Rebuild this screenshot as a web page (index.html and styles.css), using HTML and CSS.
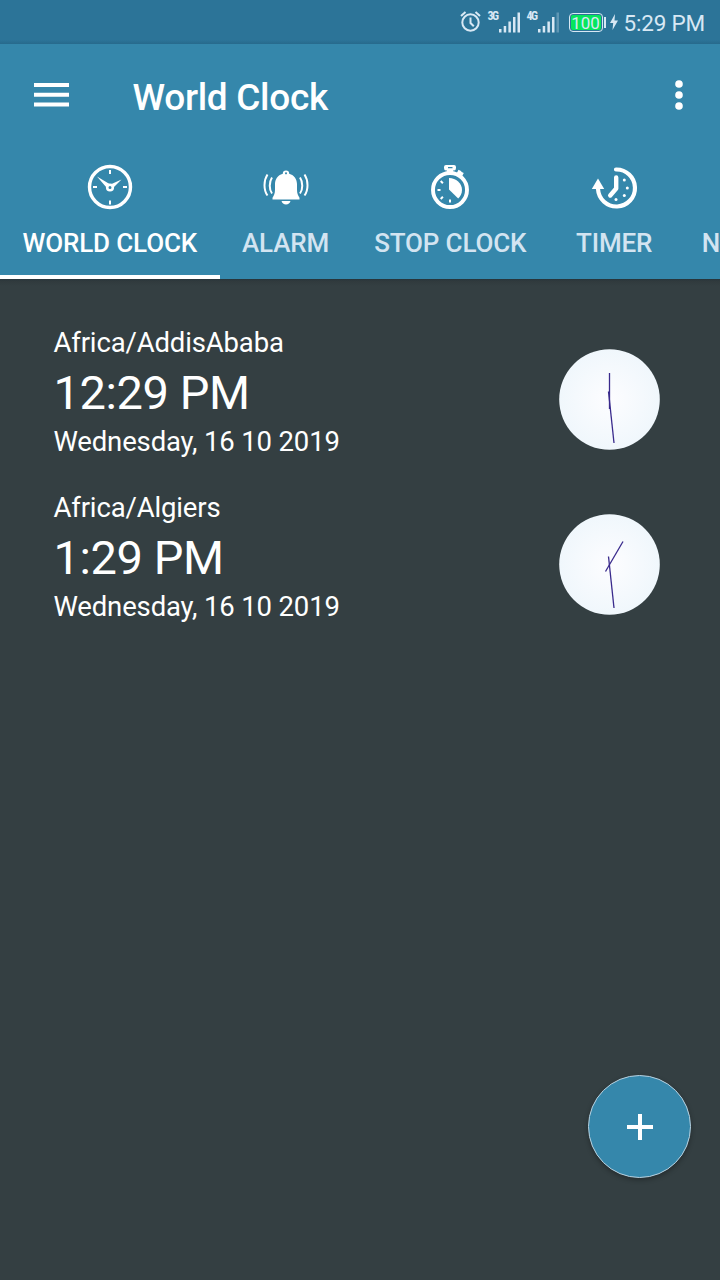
FILE: index.html
```html
<!DOCTYPE html>
<html lang="en">
<head>
    <meta charset="UTF-8">
    <title>World Clock</title>
    <meta name="viewport" content="initial-scale=1, width=device-width">
    <link rel="stylesheet" href="styles.css">
</head>
<body>
<div class="status-bar">
    <svg class="status-alarm" width="22" height="24" viewBox="0 0 22 24">
        <circle cx="10.5" cy="13.5" r="8.2"/>
        <path d="M10.5 8.500v5.500l3.300 3.300M1 7l4.500-4M20 7l-4.500-4"/>
    </svg>
    <span class="network">3G</span>
    <svg class="signal" width="22" height="21" viewBox="0 0 22 21">
        <path d="M0 17h2.500v3.500h-2.500zM4.700 14h2.500v6.500h-2.500zM9.400 9.500h2.500v11h-2.500zM14 5h2.500v15.500h-2.500zM18.500 0.500h2.500v20h-2.500z"/>
    </svg>
    <span class="network network-second">4G</span>
    <svg class="signal" width="22" height="21" viewBox="0 0 22 21">
        <path d="M0 17h2.500v3.500h-2.500zM4.700 14h2.500v6.500h-2.500zM9.400 9.500h2.500v11h-2.500zM14 5h2.500v15.500h-2.500z"/>
        <path opacity=".3" d="M18.500 0.500h2.500v20h-2.500z"/>
    </svg>
    <span class="battery"><span class="battery-level">100</span></span>
    <svg class="bolt" width="8" height="16" viewBox="0 0 8 16">
        <path d="M5 0L0 9h3.200L2.500 16L8 6.500H4.500z"/>
    </svg>
    <span class="status-time">5:29 PM</span>
</div>

<header class="app-header">
    <div class="toolbar">
        <svg class="menu-icon" width="35" height="25" viewBox="0 0 35 25">
            <path d="M0 0h35v4H0zM0 9.700h35v4H0zM0 19.500h35v4H0z"/>
        </svg>
        <h1>World Clock</h1>
        <svg class="more-icon" width="8" height="30" viewBox="0 0 8 30">
            <circle cx="4" cy="4" r="3.800"/>
            <circle cx="4" cy="15" r="3.800"/>
            <circle cx="4" cy="26" r="3.800"/>
        </svg>
    </div>
    <nav class="tabs">
        <a class="tab active">
            <svg width="48" height="48" viewBox="0 0 48 48">
                <circle class="line" cx="24" cy="24" r="20.500" stroke-width="3.400"/>
                <circle class="line" cx="24" cy="24.500" r="2.800" stroke-width="2.600"/>
                <path class="line" stroke-width="2" d="M24 7v4M24 37.500v4M7 24h4M37 24h4"/>
                <path d="M20.500 24.500L11 13.500l12.500 7.500zM25.500 21L35.500 16.500l-8 8z"/>
            </svg>
            <span>World Clock</span>
        </a>
        <a class="tab">
            <svg width="48" height="48" viewBox="0 0 48 48">
                <path fill-rule="evenodd" d="M24 7.500a3.200 3.200 0 0 1 3.200 3.200C32.500 12.200 35 16.500 35 21v5.500c0 4 1 6 2.500 8.200v1.800h-27v-1.800c1.500-2.200 2.500-4.200 2.500-8.200V21c0-4.500 2.500-8.800 7.800-10.300A3.200 3.200 0 0 1 24 7.500zM24 9.200a1 1 0 1 0 .01 0z"/>
                <path d="M19.500 38h9c-.6 2.300-2.200 3.500-4.500 3.500s-3.900-1.200-4.500-3.500z"/>
                <path class="line" stroke-width="2" d="M10 14.500c-3 4.500-3 12 0 16M5.500 11.500c-4 6-4 15.500 0 21M38 14.500c3 4.500 3 12 0 16M42.500 11.500c4 6 4 15.500 0 21"/>
            </svg>
            <span>Alarm</span>
        </a>
        <a class="tab">
            <svg width="48" height="48" viewBox="0 0 48 48">
                <circle class="line" cx="24" cy="27" r="17" stroke-width="3.900"/>
                <path d="M23 15c7 0 13 5 13 12 0 3.500-1.500 6.300-3.800 8.500L23 26.500z"/>
                <path fill-rule="evenodd" d="M20.500 2h7.500q2 0 2 2v1q0 2.500-2 2.500h-1v3.500h-6V7.500h-1q-2 0-2-2.500V4q0-2 2-2zM22 4v1.300h4.500V4z"/>
                <path class="line" stroke-width="3.400" d="M31.500 12.500l2.500-5M33 9.500l4 2"/>
                <path class="line" stroke-width="2" d="M11.500 27h3M14.700 18l2.200 2.200M14.700 36l2.200-2.200M24 36.500v3"/>
            </svg>
            <span>Stop Clock</span>
        </a>
        <a class="tab">
            <svg width="48" height="48" viewBox="0 0 48 48">
                <path class="line round" stroke-width="4.200" d="M26 6.500A18.500 18.500 0 1 1 8 26"/>
                <path d="M8 15.500l6.200 10.500H1.800z"/>
                <path class="line round" stroke-width="4.400" d="M26.200 14.500v11l-6 7"/>
                <circle cx="34.300" cy="17" r="1.500"/>
                <circle cx="37.300" cy="25" r="1.500"/>
                <circle cx="34.300" cy="32.500" r="1.500"/>
                <circle cx="26" cy="36.500" r="1.500"/>
            </svg>
            <span>Timer</span>
        </a>
        <a class="tab">
            <svg width="48" height="48" viewBox="0 0 48 48"></svg>
            <span>N</span>
        </a>
    </nav>
</header>

<main class="clock-list">
    <section class="clock-row">
        <div class="clock-info">
            <p class="zone">Africa/AddisAbaba</p>
            <p class="time">12:29 PM</p>
            <p class="date">Wednesday, 16 10 2019</p>
        </div>
        <svg class="clock-face" width="101" height="101" viewBox="0 0 101 101">
            <defs>
                <radialGradient id="face">
                    <stop offset="0" stop-color="#fdfdff"/>
                    <stop offset="1" stop-color="#f0f7fc"/>
                </radialGradient>
            </defs>
            <circle cx="50.500" cy="50.500" r="50.300" fill="url(#face)"/>
            <path class="hand" d="M50.500 24v36"/>
            <path class="hand" d="M49.500 42.500L55 94"/>
        </svg>
    </section>
    <section class="clock-row">
        <div class="clock-info">
            <p class="zone">Africa/Algiers</p>
            <p class="time">1:29 PM</p>
            <p class="date">Wednesday, 16 10 2019</p>
        </div>
        <svg class="clock-face" width="101" height="101" viewBox="0 0 101 101">
            <circle cx="50.500" cy="50.500" r="50.300" fill="url(#face)"/>
            <path class="hand" d="M64 27.500L46.500 57.500"/>
            <path class="hand" d="M49.500 42.500L55 94"/>
        </svg>
    </section>
</main>

<button class="fab" aria-label="Add clock">
    <svg width="26" height="26" viewBox="0 0 26 26">
        <path d="M11 0h4v11h11v4H15v11h-4V15H0v-4h11z"/>
    </svg>
</button>
</body>
</html>
```

FILE: styles.css
```css
* {
    box-sizing: border-box;
}
body {
    margin: 0;
    height: 1280px;
    overflow: hidden;
    background-color: #343f42;
    color: #fff;
    font-family: Roboto, "Liberation Sans", sans-serif;
}
svg {
    display: block;
    flex: none;
    fill: currentColor;
}
.status-bar {
    display: flex;
    justify-content: flex-end;
    height: 44px;
    padding: 9px 15px 0 0;
    background: linear-gradient(#2c7498 40px, #276a8c);
    color: #d8e8f4;
}
.status-alarm {
    fill: none;
    stroke: currentColor;
    stroke-width: 2;
}
.network {
    width: 11px;
    margin: 1px 0 0 6px;
    font: bold 12px/13px "Roboto Condensed", Roboto, sans-serif;
    letter-spacing: -1.7px;
}
.network-second {
    margin-left: 6px;
}
.signal {
    margin: 3px 0 0 0;
}
.battery {
    display: flex;
    position: relative;
    width: 34px;
    height: 19px;
    margin: 4px 0 0 9px;
    padding: 1px;
    border: 1px solid currentColor;
    border-radius: 4px;
}
.battery::after {
    content: "";
    position: absolute;
    left: 34px;
    top: 3px;
    width: 2px;
    height: 11px;
    background-color: currentColor;
}
.battery-level {
    flex: 1;
    border-radius: 2px;
    background-color: #06e65c;
    font-size: 17px;
    line-height: 16px;
    text-align: center;
}
.bolt {
    margin: 5px 6px 0 7px;
}
.status-time {
    font-size: 22.500px;
    line-height: 29px;
    letter-spacing: -.2px;
}
.app-header {
    height: 235px;
    overflow: hidden;
    background-color: #3587ab;
}
.toolbar {
    display: flex;
    align-items: center;
    height: 102px;
    padding: 0 37px 0 34px;
}
.toolbar h1 {
    flex: 1;
    margin: 4px 0 0 63.500px;
    font-size: 37px;
    font-weight: 500;
    letter-spacing: -.3px;
}
.tabs {
    display: flex;
    height: 133px;
}
.tab {
    display: flex;
    flex: none;
    flex-direction: column;
    align-items: center;
    min-width: 130.500px;
    padding: 17px 22.500px 0;
    border-bottom: 4px solid transparent;
    font-size: 26px;
    font-weight: 500;
    line-height: 30px;
    letter-spacing: -.15px;
    text-transform: uppercase;
    white-space: nowrap;
}
.tab:last-child {
    align-items: flex-start;
}
.tab span {
    margin-top: 17px;
    color: #d3e4f1;
}
.tab.active {
    border-color: #fff;
}
.tab.active span {
    color: #fff;
}
.line {
    fill: none;
    stroke: currentColor;
}
.round {
    stroke-linecap: round;
    stroke-linejoin: round;
}
.clock-list {
    padding: 41px 60px 0 53.500px;
    background: linear-gradient(#26343b, #303a3d 2px, #343f42 7px);
}
.clock-row {
    display: flex;
    justify-content: space-between;
    height: 165px;
}
.clock-info p {
    margin: 0;
    white-space: nowrap;
}
.zone,
.date {
    font-size: 27.500px;
    line-height: 46px;
    letter-spacing: -.15px;
}
.time {
    font-size: 47px;
    line-height: 53px;
    letter-spacing: -.4px;
}
.clock-face {
    margin-top: 29px;
}
.hand {
    fill: none;
    stroke: #392a8c;
    stroke-width: 1.300;
}
.fab {
    display: flex;
    position: fixed;
    right: 29px;
    bottom: 102px;
    align-items: center;
    justify-content: center;
    width: 103px;
    height: 103px;
    padding: 0;
    border: 1px solid #b9d3e2;
    border-radius: 50%;
    background-color: #3587ab;
    color: #fff;
    box-shadow: 0 2px 5px rgba(0, 0, 0, .3);
}
```
